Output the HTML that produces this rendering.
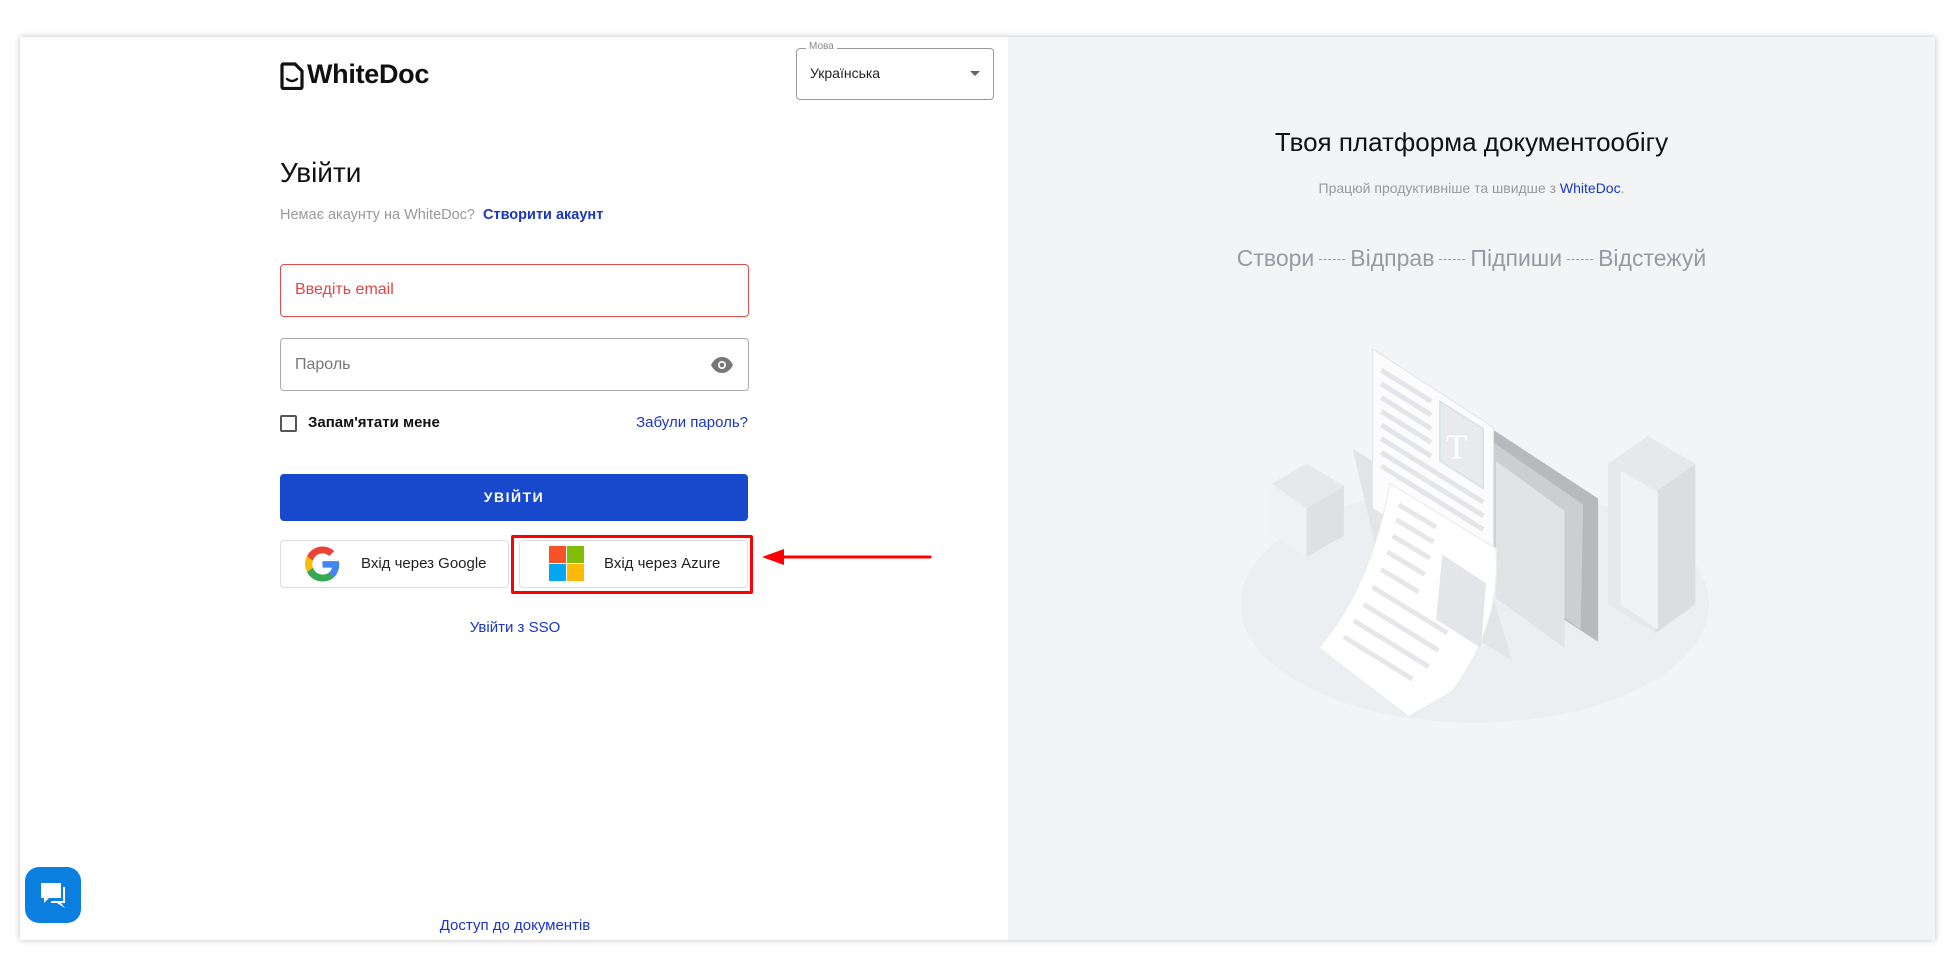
<!DOCTYPE html>
<html><head><meta charset="utf-8">
<style>
*{margin:0;padding:0;box-sizing:border-box}
html,body{width:1955px;height:977px;background:#fff;overflow:hidden;font-family:"Liberation Sans","DejaVu Sans",sans-serif;position:relative}
.abs{position:absolute}
.card{left:20px;top:37px;width:1915px;height:903px;background:#fff;box-shadow:0 0 6px rgba(0,0,0,.25)}
.right{left:1008px;top:37px;width:927px;height:903px;background:#f3f4f6}
.blue{color:#1a35c2}
.inp{border:1px solid #b8b8b8;border-radius:4px;background:#fff}
.dash{display:inline-block;width:26px;border-top:1px dashed #969ba2;vertical-align:middle;margin:0 5px}
</style></head><body>
<div class="abs card"></div>
<div class="abs right"></div>

<svg class="abs" style="left:280px;top:62px" width="24" height="28" viewBox="0 0 24 28">
<path d="M3 2h12l7 7v16a1.5 1.5 0 0 1-1.5 1.5h-17A1.5 1.5 0 0 1 2 25V3.5A1.5 1.5 0 0 1 3 2z" fill="none" stroke="#111" stroke-width="3.2" stroke-linejoin="round"/>
<path d="M7 17q5 4 10 0" fill="none" stroke="#111" stroke-width="2.4" stroke-linecap="round"/>
</svg>
<div class="abs" style="left:307px;top:59px;font-size:27px;font-weight:bold;color:#111;letter-spacing:-0.3px">WhiteDoc</div>

<div class="abs inp" style="left:796px;top:48px;width:198px;height:52px;border-color:#9a9a9a"></div>
<div class="abs" style="left:806px;top:41px;font-size:10px;color:#888;background:#fff;padding:0 3px">Мова</div>
<div class="abs" style="left:810px;top:65px;font-size:14px;color:#222">Українська</div>
<div class="abs" style="left:970px;top:71px;width:0;height:0;border-left:5px solid transparent;border-right:5px solid transparent;border-top:5px solid #666"></div>

<div class="abs" style="left:280px;top:157px;font-size:28px;color:#111">Увійти</div>
<div class="abs" style="left:280px;top:207px;font-size:14.5px;color:#999">Немає акаунту на WhiteDoc? <span class="blue" style="font-weight:bold;margin-left:4px">Створити акаунт</span></div>

<div class="abs inp" style="left:280px;top:264px;width:469px;height:53px;border-color:#e04c4c"></div>
<div class="abs" style="left:295px;top:281px;font-size:16px;color:#e04545">Введіть email</div>
<div class="abs inp" style="left:280px;top:338px;width:469px;height:53px;border-color:#aaa"></div>
<div class="abs" style="left:295px;top:356px;font-size:16px;color:#777">Пароль</div>
<svg class="abs" style="left:710px;top:354px" width="24" height="22" viewBox="0 0 24 22"><path d="M1 11C4 5 8 3 12 3s8 2 11 8c-3 6-7 8-11 8S4 17 1 11z" fill="#777"/><circle cx="12" cy="11" r="4" fill="#fff"/><circle cx="12" cy="11" r="2.3" fill="#777"/></svg>

<div class="abs" style="left:280px;top:415px;width:17px;height:17px;border:2px solid #555;border-radius:2px"></div>
<div class="abs" style="left:308px;top:414px;font-size:15px;font-weight:bold;color:#111">Запам'ятати мене</div>
<div class="abs blue" style="left:600px;width:148px;text-align:right;top:414px;font-size:15px">Забули пароль?</div>

<div class="abs" style="left:280px;top:474px;width:468px;height:47px;background:#1849cc;border-radius:4px;color:#fff;font-weight:bold;font-size:14px;letter-spacing:1.5px;text-align:center;line-height:47px">УВІЙТИ</div>

<div class="abs inp" style="left:280px;top:540px;width:229px;height:48px;border-color:#ddd"></div>
<svg class="abs" style="left:305px;top:546px" width="35" height="36" viewBox="0 0 48 48">
<path fill="#EA4335" d="M24 9.5c3.5 0 6.7 1.2 9.2 3.6l6.9-6.9C35.9 2.4 30.4 0 24 0 14.6 0 6.6 5.4 2.7 13.3l8 6.2C12.6 13.6 17.8 9.5 24 9.5z"/>
<path fill="#4285F4" d="M46.9 24.5c0-1.6-.1-3.1-.4-4.5H24v9h12.9c-.6 3-2.3 5.5-4.8 7.2l7.7 6c4.5-4.200 7.1-10.3 7.1-17.7z"/>
<path fill="#FBBC05" d="M10.7 28.5c-.5-1.4-.8-3-.8-4.5s.3-3.1.8-4.5l-8-6.2C1 16.6 0 20.2 0 24s1 7.4 2.7 10.7l8-6.2z"/>
<path fill="#34A853" d="M24 48c6.5 0 11.9-2.1 15.9-5.8l-7.7-6c-2.2 1.5-5 2.3-8.2 2.3-6.2 0-11.4-4.1-13.3-9.7l-8 6.2C6.6 42.6 14.6 48 24 48z"/>
</svg>
<div class="abs" style="left:361px;top:555px;font-size:15px;color:#222">Вхід через Google</div>

<div class="abs" style="left:511px;top:535px;width:242px;height:59px;border:3px solid #f00;border-radius:2px"></div>
<div class="abs inp" style="left:519px;top:540px;width:229px;height:48px;border-color:#ddd"></div>
<div class="abs" style="left:549px;top:546px;width:17px;height:17px;background:#f35325"></div>
<div class="abs" style="left:567px;top:546px;width:17px;height:17px;background:#81bc06"></div>
<div class="abs" style="left:549px;top:564px;width:17px;height:17px;background:#05a6f0"></div>
<div class="abs" style="left:567px;top:564px;width:17px;height:17px;background:#ffba08"></div>
<div class="abs" style="left:604px;top:555px;font-size:15px;color:#222">Вхід через Azure</div>

<svg class="abs" style="left:760px;top:547px" width="175" height="20"><path d="M20 10H170" stroke="#f00" stroke-width="3" stroke-linecap="round"/><path d="M2 10L24 2V18z" fill="#f00"/></svg>

<div class="abs blue" style="left:415px;width:200px;text-align:center;top:619px;font-size:15px">Увійти з SSO</div>
<div class="abs blue" style="left:385px;width:260px;text-align:center;top:917px;font-size:15px">Доступ до документів</div>

<div class="abs" style="left:25px;top:867px;width:56px;height:56px;background:#0a7fe0;border-radius:14px"></div>
<svg class="abs" style="left:37px;top:880px" width="32" height="30" viewBox="0 0 32 30"><path d="M4 3h20v15H12l-5 5v-5H4z" fill="#fff"/><path d="M26 7h2v16h-4l4 5-8-5h-6v-2h12z" fill="#fff"/></svg>

<div class="abs" style="left:1008px;width:927px;text-align:center;top:127px;font-size:26px;color:#111">Твоя платформа документообігу</div>
<div class="abs" style="left:1008px;width:927px;text-align:center;top:180px;font-size:14px;color:#999">Працюй продуктивніше та швидше з <span class="blue">WhiteDoc</span>.</div>
<div class="abs" style="left:1008px;width:927px;text-align:center;top:245px;font-size:23px;color:#969ba2;white-space:nowrap">Створи<span class="dash"></span>Відправ<span class="dash"></span>Підпиши<span class="dash"></span>Відстежуй</div>

<svg class="abs" style="left:0;top:0" width="1955" height="977" viewBox="0 0 1568 784">
<ellipse cx="1183" cy="485" rx="188" ry="95" fill="#eceef1"/>
<polygon points="1020,388 1048,372 1078,390 1078,430 1048,447 1020,430" fill="#e7e8ea"/>
<polygon points="1048,408 1078,390 1078,430 1048,447" fill="#dfe0e3"/>
<polygon points="1020,388 1048,408 1048,447 1020,430" fill="#f0f1f3"/>
<polygon points="1290,372 1322,350 1360,372 1360,485 1328,508 1290,485" fill="#e7e8ea"/>
<polygon points="1328,395 1360,372 1360,485 1328,508" fill="#dcdde0"/>
<polygon points="1300,378 1330,395 1330,505 1300,485" fill="#f1f2f4"/>
<polygon points="1198,345 1282,400 1282,515 1198,460" fill="#b8b9bc"/>
<polygon points="1198,355 1270,405 1268,505 1198,455" fill="#cdcecf"/>
<polygon points="1200,370 1255,410 1255,520 1200,480" fill="#e2e3e5"/>
<polygon points="1085,360 1180,420 1213,530 1110,468" fill="#e3e4e6"/>
<polygon points="1101,280 1198,343 1198,470 1101,408" fill="#fcfcfd" stroke="#e6e7ea"/>
<g stroke="#e4e5e8" stroke-width="4">
<line x1="1108" y1="297" x2="1148" y2="322"/><line x1="1108" y1="308" x2="1148" y2="333"/><line x1="1108" y1="319" x2="1148" y2="344"/><line x1="1108" y1="330" x2="1148" y2="355"/><line x1="1108" y1="341" x2="1148" y2="366"/><line x1="1108" y1="352" x2="1190" y2="403"/><line x1="1108" y1="363" x2="1190" y2="414"/><line x1="1108" y1="374" x2="1190" y2="425"/>
</g>
<polygon points="1155,322 1190,344 1190,392 1155,370" fill="#e8eaec" stroke="#cfe0e3"/>
<text x="1160" y="368" font-family="Liberation Serif,serif" font-size="28" fill="#fff">T</text>
<path d="M1115,388 L1200,440 Q1205,500 1165,555 L1130,575 L1058,520 Q1100,470 1115,388z" fill="#fff" stroke="#ebecee"/>
<g stroke="#e6e7ea" stroke-width="4" fill="none">
<path d="M1122,405 l30,18"/><path d="M1120,417 l30,18"/><path d="M1117,430 l30,18"/><path d="M1113,443 l30,18"/><path d="M1108,457 l30,18"/><path d="M1101,471 l60,37"/><path d="M1094,485 l60,37"/><path d="M1086,498 l60,37"/><path d="M1078,511 l55,34"/>
</g>
<polygon points="1157,445 1192,468 1188,520 1152,497" fill="#e4e5e8"/>
</svg>
</body></html>
